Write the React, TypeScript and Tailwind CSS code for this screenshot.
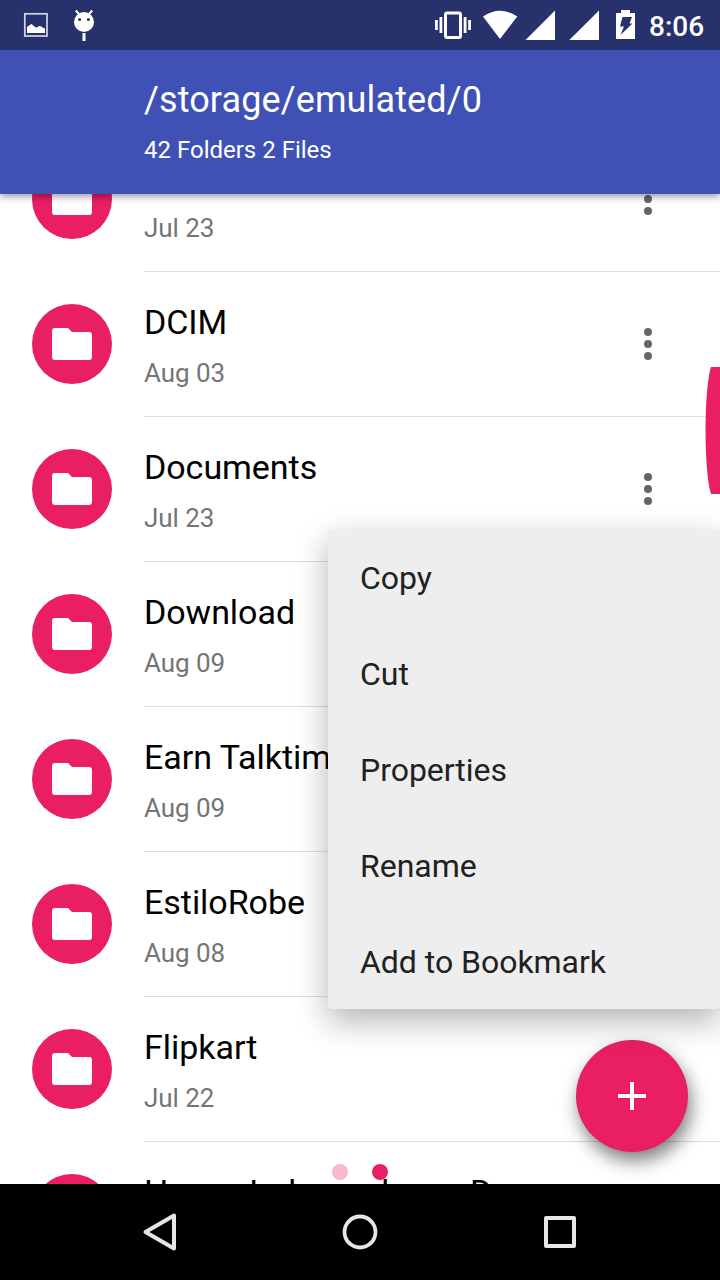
import { useState } from 'react';

type Folder = {
  name: string;
  date: string;
};

const folders: Folder[] = [
  { name: '', date: 'Jul 23' },
  { name: 'DCIM', date: 'Aug 03' },
  { name: 'Documents', date: 'Jul 23' },
  { name: 'Download', date: 'Aug 09' },
  { name: 'Earn Talktime', date: 'Aug 09' },
  { name: 'EstiloRobe', date: 'Aug 08' },
  { name: 'Flipkart', date: 'Jul 22' },
  { name: 'Happy Independence Day', date: '' },
];

const menuItems = ['Copy', 'Cut', 'Properties', 'Rename', 'Add to Bookmark'];

function StatusBar() {
  return (
    <div className="z-20 flex h-[50px] shrink-0 items-center justify-between bg-[#27316c] text-white">
      <svg width="120" height="50" viewBox="0 0 120 50">
        <rect x="24.8" y="13.8" width="22.2" height="22.2" fill="none" stroke="#d4d6e1" strokeWidth="1.700" />
        <path d="M27 33v-6l2-1.500 2.300-1.500 1.900 1.300 2 2h1.800l2.500-1.200 1.500.2 1.500 1.300 2.500.9V33z" fill="#fff" />
        {/* lollipop bugdroid */}
        <path d="M75.800 10.500l4 4.500M92.200 10.500l-4 4.500" stroke="#fff" strokeWidth="2" />
        <circle cx="84" cy="22" r="10" fill="#fff" />
        <circle cx="79.600" cy="19.400" r="1.500" fill="#27316c" />
        <circle cx="88.400" cy="19.400" r="1.500" fill="#27316c" />
        <rect x="82.500" y="33" width="3" height="8" fill="#fff" />
      </svg>
      <div className="flex items-center pr-[17px]">
        <svg width="220" height="50" viewBox="430 0 220 50" fill="#fff">
          <rect x="445.500" y="13" width="15" height="24.500" rx="1.500" fill="none" stroke="#fff" strokeWidth="3" />
          <path d="M435 20h2.800v10h-2.800zM439.500 17h2.800v16h-2.800zM463.700 17h2.800v16h-2.800zM468.200 20h2.800v10h-2.800z" />
          <path d="M483 16.500Q500 5 517.300 16.500L500 39z" />
          <path d="M525.500 40L555 10.500V40zM569.300 40L599 10.500V40z" />
          <path d="M621 10h9v3h5v26h-19v-26h5z" />
          <path d="M622.500 17h9.500l-2.500 6.500h3L620.500 35l3.500-8.500h-4z" fill="#27316c" />
        </svg>
        <span className="-ml-px w-[54px] pt-1 text-[28px] leading-8 font-medium">8:06</span>
      </div>
    </div>
  );
}

function FolderRow({ folder }: { folder: Folder }) {
  return (
    <div className="flex h-[145px] shrink-0 pl-8">
      <div className="mt-8 mr-8 flex size-20 shrink-0 items-center justify-center rounded-full bg-[#e91e63]">
        <svg width="40" height="32" viewBox="0 0 40 32" fill="#fff">
          <path d="M3 0h13l4 4h17a3 3 0 0 1 3 3v22a3 3 0 0 1-3 3h-34a3 3 0 0 1-3-3v-26a3 3 0 0 1 3-3z" />
        </svg>
      </div>
      <div className="flex flex-1 justify-between border-b border-[#dedede]">
        <div className="pt-[30px] whitespace-nowrap">
          <p className="h-10 text-[34px] leading-10 tracking-[-0.04px] text-black">{folder.name}</p>
          <p className="mt-[15px] text-[26px] leading-8 tracking-[-0.05px] text-[#757575]">{folder.date}</p>
        </div>
        <button className="flex w-36 items-center justify-center" aria-label="More">
          <svg width="8" height="32" viewBox="0 0 8 32" fill="#666">
            <circle cx="4" cy="4" r="4" />
            <circle cx="4" cy="16" r="4" />
            <circle cx="4" cy="28" r="4" />
          </svg>
        </button>
      </div>
    </div>
  );
}

function NavBar() {
  return (
    <div className="z-30 flex h-24 shrink-0 items-center justify-center gap-40 bg-black">
      <svg width="40" height="40" viewBox="0 0 40 40" fill="none" stroke="#e6e6e6" strokeWidth="4" strokeLinejoin="round">
        <path d="M5.500 20L34 3.500v33z" />
      </svg>
      <svg width="40" height="40" viewBox="0 0 40 40" fill="none" stroke="#e6e6e6" strokeWidth="3.800">
        <circle cx="20" cy="20" r="15.500" />
      </svg>
      <svg width="40" height="40" viewBox="0 0 40 40" fill="none" stroke="#e6e6e6" strokeWidth="4" strokeLinejoin="round">
        <rect x="6" y="6" width="28" height="28" />
      </svg>
    </div>
  );
}

export default function App() {
  const [menuOpen, setMenuOpen] = useState(true);

  return (
    <div className="relative flex h-[1280px] w-[720px] flex-col overflow-hidden bg-white font-['Roboto',sans-serif]">
      <StatusBar />

      <header className="z-10 h-36 shrink-0 bg-[#3f51b5] pt-[30px] pl-36 text-white shadow-[0_2px_8px_rgba(0,0,0,0.45)]">
        <h1 className="text-[36px] leading-10 tracking-[0.12px]">/storage/emulated/0</h1>
        <p className="mt-3.5 text-[24px] leading-8">42 Folders 2 Files</p>
      </header>

      <main className="flex min-h-0 flex-1 flex-col overflow-hidden">
        <div className="-mt-[67px] flex flex-col">
          {folders.map((folder, i) => (
            <FolderRow key={i} folder={folder} />
          ))}
        </div>
      </main>

      <NavBar />

      {/* fast scroll handle */}
      <svg className="absolute top-[367px] right-0" width="15" height="127" viewBox="0 0 15 127">
        <path d="M15 0H6C-1.300 24-1.300 103 6 127h9z" fill="#e91e63" />
      </svg>

      {/* page indicator */}
      <div className="absolute top-[1164px] left-[332px] flex gap-6">
        <span className="size-4 rounded-full bg-[#f8b8ce]" />
        <span className="size-4 rounded-full bg-[#e91e63]" />
      </div>

      <button
        className="absolute top-[1040px] left-[576px] flex size-28 items-center justify-center rounded-full bg-[#e91e63] shadow-[3px_9px_18px_rgba(0,0,0,0.5)]"
        onClick={() => setMenuOpen(!menuOpen)}
        aria-label="Add"
      >
        <svg width="28" height="28" viewBox="0 0 28 28" fill="#fff">
          <path d="M12 0h4v12h12v4H16v12h-4V16H0v-4h12z" />
        </svg>
      </button>

      {menuOpen && (
        <ul className="absolute top-[529px] right-0 z-20 w-[392px] rounded bg-[#eee] pt-px shadow-[0_12px_32px_rgba(0,0,0,0.3)]">
          {menuItems.map((item) => (
            <li key={item} className="flex h-24 items-center pl-8 text-[32px] tracking-[-0.03px] text-[#212121] last:h-[95px]">
              {item}
            </li>
          ))}
        </ul>
      )}
    </div>
  );
}
